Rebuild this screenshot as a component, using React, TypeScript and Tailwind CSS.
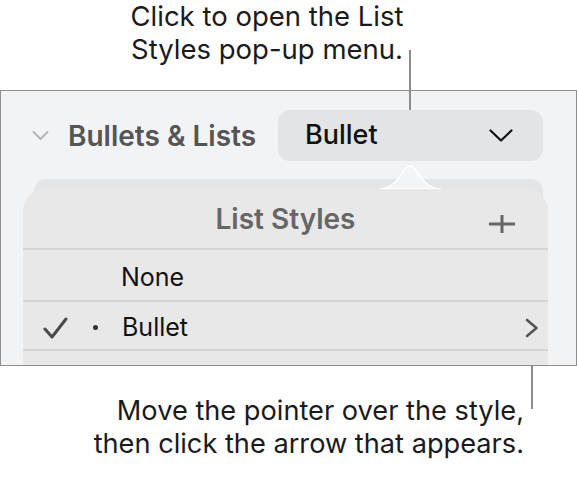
import React from "react";

const font = { fontFamily: "Inter, 'Noto Sans', sans-serif" };

const Separator = () => <div className="h-[2px] bg-[#d5d5d5]" />;

export default function App() {
  return (
    <div className="relative w-[577px] h-[497px] bg-white text-[#1a1a1a]" style={font}>
      {/* top caption */}
      <div className="ml-[112px] w-[310px] text-center text-[27.5px] leading-[33px]">
        Click to open the List
        <br />
        Styles pop-up menu.
      </div>

      {/* callout lines */}
      <div className="absolute left-[409px] top-[50px] h-[60px] w-[2px] bg-[#8c8c8c]" />
      <div className="absolute left-[531px] top-[337px] h-[72px] w-[2px] bg-[#8c8c8c]" />

      {/* inspector panel */}
      <div className="mt-[24px] h-[276px] w-[577px] border border-[#8e8e8e] bg-[#f2f3f5] overflow-hidden">
        <div className="flex items-center pt-[19px]">
          <svg width="17" height="11" viewBox="0 0 17 11" className="ml-[31px]">
            <path d="M1.5 2 L8.5 9 L15.5 2" fill="none" stroke="#b3b3b3" strokeWidth="1.8" strokeLinecap="round" strokeLinejoin="round" />
          </svg>
          <span className="ml-[19px] text-[28px] font-semibold text-[#555555]">
            Bullets &amp; Lists
          </span>
          <div className="ml-auto mr-[33px] flex h-[51px] w-[265px] items-center justify-between rounded-[12px] bg-[#e3e4e6] pl-[27px] pr-[30px]">
            <span className="text-[27px] font-medium text-[#111]">Bullet</span>
            <svg width="24" height="13" viewBox="0 0 24 13">
              <path d="M1.5 1.5 L12 11.5 L22.5 1.5" fill="none" stroke="#111" strokeWidth="2.2" strokeLinecap="round" strokeLinejoin="round" />
            </svg>
          </div>
        </div>

        {/* popover */}
        <div className="relative mt-[28px] ml-[22px] w-[525px]">
          <div className="absolute left-[11px] top-[-10px] h-[40px] w-[509px] rounded-[12px] bg-[#e4e5e7]" />
          <svg width="62" height="25" viewBox="0 0 62 25" className="absolute left-[356px] top-[-24px]">
            <path d="M0 24 C16 24 22 8 27 3 Q31 -0.5 35 3 C40 8 46 24 62 24 Z" fill="#f3f4f5" stroke="#ffffff" strokeWidth="1.5" />
          </svg>
          <div className="relative rounded-t-[22px] bg-[#e8e8e8]">
            <div className="relative flex h-[59px] items-center justify-center">
              <span className="text-[28px] font-semibold text-[#666666]">List Styles</span>
              <svg width="26" height="18" viewBox="0 0 26 18" className="absolute right-[33px] top-[26px]">
                <path d="M13 0 V18 M0 9 H26" stroke="#666" strokeWidth="3" strokeLinecap="round" />
              </svg>
            </div>
            <Separator />
            <div className="flex h-[50px] items-center pl-[98px] pt-[5px] text-[25px] text-[#111]">None</div>
            <Separator />
            <div className="flex h-[47px] items-center pt-[4px] text-[25px] text-[#111]">
              <svg width="25" height="22" viewBox="0 0 25 22" className="ml-[20px]">
                <path d="M2 12 L9 20 L23 2" fill="none" stroke="#4a4a4a" strokeWidth="3" strokeLinecap="round" strokeLinejoin="round" />
              </svg>
              <span className="ml-[25px] h-[5px] w-[5px] rounded-full bg-[#333]" />
              <span className="ml-[24px]">Bullet</span>
              <svg width="14" height="20" viewBox="0 0 14 20" className="ml-auto mr-[9px]">
                <path d="M2 2 L11.5 10 L2 18" fill="none" stroke="#555" strokeWidth="2.6" strokeLinecap="round" strokeLinejoin="round" />
              </svg>
            </div>
            <Separator />
            <div className="h-[20px]" />
          </div>
        </div>
      </div>

      {/* bottom caption */}
      <div className="mt-[28px] mr-[53px] text-right text-[27.2px] leading-[33px]">
        Move the pointer over the style,
        <br />
        then click the arrow that appears.
      </div>
    </div>
  );
}
